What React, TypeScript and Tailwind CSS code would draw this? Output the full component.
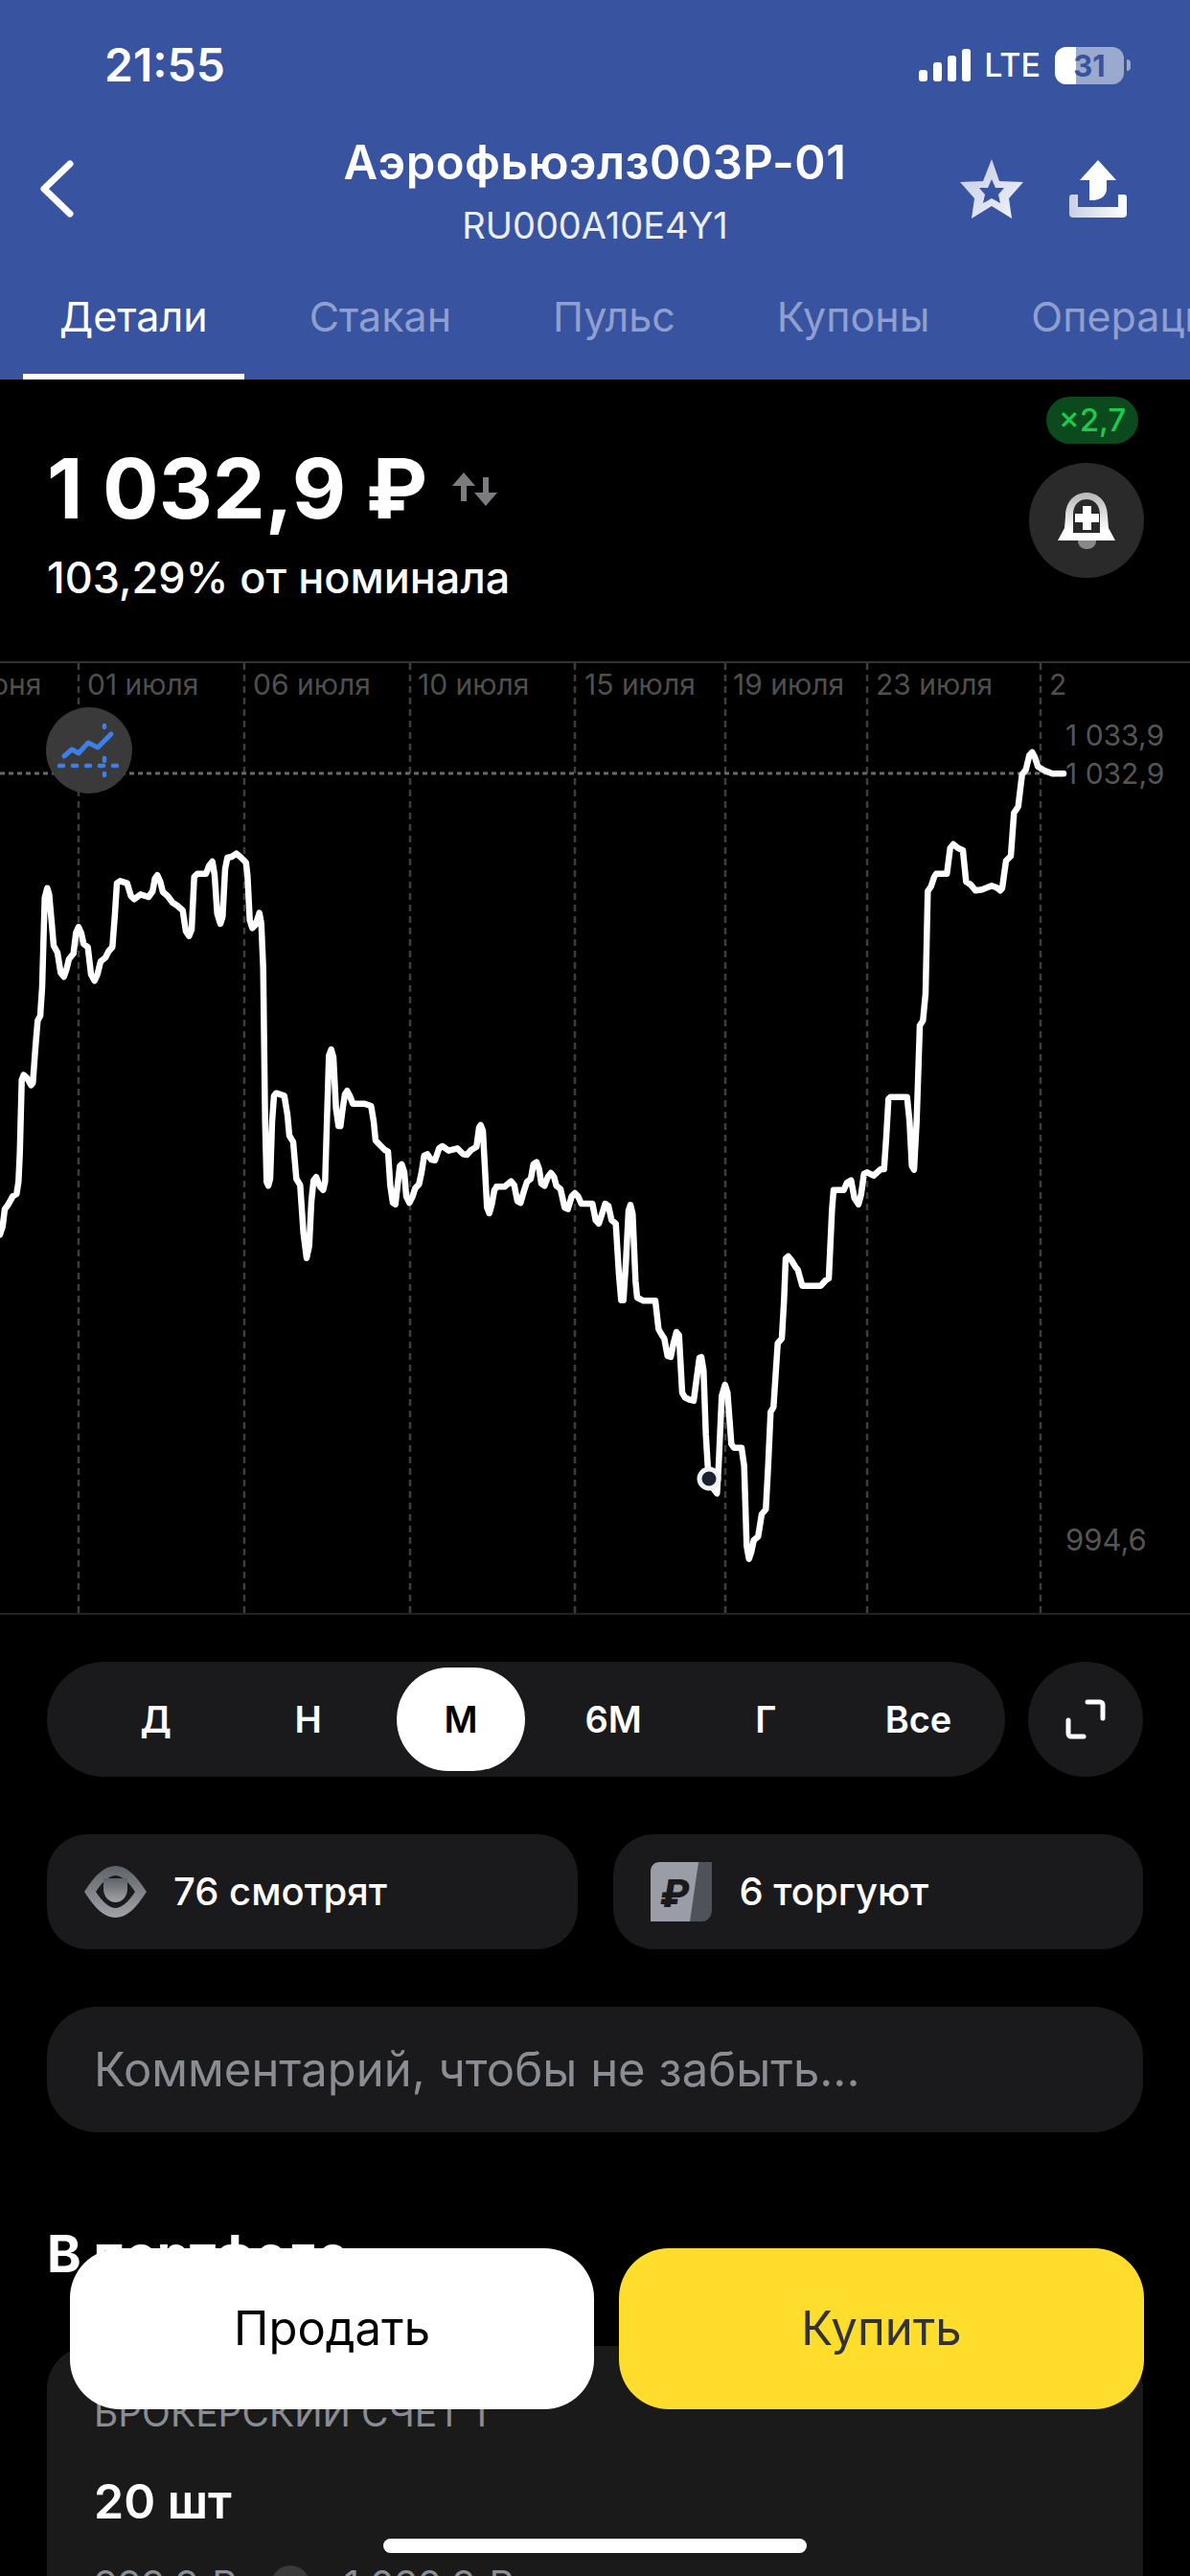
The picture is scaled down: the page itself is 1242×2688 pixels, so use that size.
import { ReactNode } from "react";

const TABS = ["Детали", "Стакан", "Пульс", "Купоны", "Операции"];
const PERIODS = ["Д", "Н", "М", "6М", "Г", "Все"];

const GRID_X = [82, 255, 428, 600, 757, 905, 1086];
const CHART_TOP = 692;

const DATES: [number, string][] = [
  [-34, "июня"],
  [91, "01 июля"],
  [264, "06 июля"],
  [436, "10 июля"],
  [610, "15 июля"],
  [765, "19 июля"],
  [914, "23 июля"],
  [1095, "2"],
];

// traced from the crops: [x, y] pairs at 3x, each run has its own origin
const RUN_A = [
  0,1255, 8,1230, 15,1175, 25,1162, 40,1135, 52,1128, 58,1090, 62,1000, 68,770, 74,755, 85,765, 97,787, 103,780,
  110,680, 118,585, 126,570, 132,480, 140,200, 148,170, 154,190, 162,280, 168,350, 180,372, 190,435, 200,448,
  208,425, 216,392, 230,375, 238,310, 246,292, 254,310, 262,345, 275,355, 285,440, 296,460, 305,440, 315,400,
  330,388, 340,368, 352,355, 360,250, 366,155, 376,148, 398,155, 410,195, 420,205, 440,190, 465,198, 478,180,
  485,140, 493,130, 502,150, 510,182, 525,195, 540,215, 555,225, 572,240, 582,305, 592,320, 600,300, 608,135,
  618,125, 645,125, 655,100, 665,87, 672,130, 680,250, 690,282, 697,260, 705,110, 712,75, 725,72, 740,62, 752,72,
  770,90, 775,130, 782,270, 790,295, 800,285, 812,248, 818,280, 824,420, 830,900, 835,1090, 840,1102, 846,1080,
  852,900, 858,820, 865,812, 890,820, 900,880, 906,945, 918,965, 928,1080, 940,1100, 950,1250, 960,1328, 968,1290,
  975,1150, 982,1085, 990,1075, 1002,1105, 1012,1115, 1018,1090, 1025,850, 1030,695, 1037,675, 1044,700, 1052,860,
  1060,915, 1066,915, 1073,860, 1080,815, 1087,805, 1095,820, 1105,845, 1140,845, 1162,852, 1170,900, 1176,960,
  1190,975, 1205,990, 1215,995, 1222,1100, 1230,1155, 1238,1160, 1245,1100, 1252,1040, 1258,1035, 1266,1060,
  1272,1135, 1282,1155, 1292,1135, 1300,1110, 1312,1097, 1320,1060, 1328,1008, 1338,1003, 1350,1020, 1362,1022,
  1375,985, 1385,978, 1405,992, 1432,985, 1450,1003, 1462,1005, 1475,990, 1492,980, 1500,920, 1505,912, 1512,930,
  1520,1080, 1525,1170, 1532,1188, 1540,1160, 1548,1115, 1556,1105,
];
const RUN_B = [
  355,325, 380,325, 400,308, 410,320, 420,370, 430,375, 440,340, 450,310, 462,300, 470,255, 480,248, 488,270,
  495,315, 505,322, 515,295, 525,282, 535,295, 542,322, 555,332, 568,390, 578,395, 590,355, 600,345, 610,355,
  620,378, 655,378, 665,430, 675,440, 685,410, 695,378, 705,385, 715,430, 728,440, 738,600, 745,680, 752,680,
  760,560, 768,400, 774,382, 781,410, 790,620, 795,672, 815,682, 852,682, 862,770, 870,785, 880,800, 890,855,
  900,858, 910,810, 918,780, 926,790, 936,970, 945,985, 960,992, 972,995, 982,920, 990,860, 996,858, 1003,900,
  1010,1100, 1016,1200, 1030,1265, 1045,1285, 1050,1200, 1060,980, 1070,945, 1078,970, 1090,1130, 1098,1142,
  1122,1142, 1130,1200, 1138,1450, 1145,1490, 1152,1470, 1160,1432, 1174,1420, 1185,1350, 1198,1335, 1205,1200,
  1213,1030, 1222,1015, 1235,815, 1248,800, 1255,680, 1260,550, 1268,543, 1278,555, 1290,575, 1298,585, 1312,635,
  1370,635, 1385,618, 1395,612, 1405,400, 1410,335, 1442,335, 1452,312, 1465,305, 1475,360, 1488,380, 1496,350,
  1505,285, 1515,280, 1535,290, 1558,270,
];
const RUN_C = [
  548,1350, 555,1250, 562,1130, 568,1124, 620,1124, 628,1200, 635,1340, 642,1352, 650,1200, 660,900, 670,885,
  678,800, 685,480, 695,465, 705,435, 712,425, 745,425, 755,345, 765,333, 780,345, 795,352, 805,450, 820,460,
  835,478, 855,475, 885,463, 900,468, 912,478, 918,470, 930,385, 945,370, 955,235, 968,215, 980,115, 992,100,
  1003,55, 1012,45, 1020,60, 1030,90, 1050,102, 1075,112, 1110,112,
];

function toPoints(run: number[], ox: number, oy: number) {
  const out: string[] = [];
  for (let i = 0; i < run.length; i += 2) {
    out.push(`${(ox + run[i] / 3).toFixed(1)},${(oy - CHART_TOP + run[i + 1] / 3).toFixed(1)}`);
  }
  return out;
}

const LINE = [...toPoints(RUN_A, 0, 870), ...toPoints(RUN_B, 400, 1130), ...toPoints(RUN_C, 740, 770)].join(" ");

export default function App() {
  return (
    <div className="relative h-[2688px] w-[1242px] overflow-hidden bg-black font-['Inter',sans-serif] text-white">
      {/* Header */}
      <div className="h-[396px] bg-[#38539f]">
        <StatusBar />
        <div className="grid h-[134px] grid-cols-[260px_1fr_260px] items-center">
          <div className="pb-[12px] pl-[41px]">
            <svg className="block" width="36" height="60" viewBox="0 0 36 60" fill="none">
              <path d="M32 4 L5 30 L32 56" stroke="white" strokeWidth="7" strokeLinecap="round" strokeLinejoin="round" />
            </svg>
          </div>
          <div className="pb-[9px] text-center whitespace-nowrap">
            <div className="text-[49px] leading-[60px] font-semibold tracking-[0.5px]">Аэрофьюэлз003Р-01</div>
            <div className="mt-[13px] text-[38px] leading-[44px] text-white/90">RU000A10E4Y1</div>
          </div>
          <div className="flex items-center justify-end gap-[48px] pr-[66px] pb-[12px]">
            <StarIcon />
            <ShareIcon />
          </div>
        </div>
        <div className="flex h-[126px] overflow-hidden pl-[24px] whitespace-nowrap">
          <div className="flex gap-[30px]">
            {TABS.map((t, i) => (
              <div
                key={t}
                className={`flex items-center border-b-[6px] px-[38px] text-[43px] ${
                  i === 0 ? "border-white text-white" : "border-transparent text-[#8fa0d0]"
                }`}
              >
                {t}
              </div>
            ))}
          </div>
        </div>
      </div>

      {/* Price */}
      <div className="flex h-[294px] justify-between pr-[48px] pl-[49px]">
        <div className="pt-[64px]">
          <div className="flex items-start">
            <span className="text-[87px] leading-[100px] font-bold">1 032,9 ₽</span>
            <svg className="mt-[33px] ml-[26px]" width="48" height="36" viewBox="0 0 48 36" fill="#7a7c80">
              <path d="M12 0 L24 14 H15 V30 H9 V14 H0 Z" />
              <path d="M35 35 L23 21 H32 V5 H38 V21 H47 Z" />
            </svg>
          </div>
          <div className="mt-[18px] text-[45px] leading-[50px] font-medium">103,29% от номинала</div>
        </div>
        <div className="flex w-[120px] flex-col items-end pt-[18px]">
          <div className="mr-[6px] flex h-[49px] w-[96px] items-center justify-center rounded-full bg-[#0b4a1d] text-[33px] font-medium text-[#1fc94f]">
            ×2,7
          </div>
          <div className="mt-[20px] flex h-[120px] w-[120px] items-center justify-center rounded-full bg-[#2a2a2a]">
            <BellIcon />
          </div>
        </div>
      </div>

      {/* Chart */}
      <Chart />

      {/* Controls */}
      <div className="mt-[49px] flex gap-[24px] px-[49px]">
        <div className="grid h-[120px] w-[1001px] grid-cols-6 items-center rounded-full bg-[#1a1a1c] pr-[11px] pl-[34px]">
          {PERIODS.map((p) => (
            <div key={p} className="flex justify-center">
              <div
                className={`flex h-[108px] w-[134px] items-center justify-center rounded-full text-[38px] font-semibold ${
                  p === "М" ? "bg-white text-black" : "text-white"
                }`}
              >
                {p}
              </div>
            </div>
          ))}
        </div>
        <div className="flex h-[120px] w-[120px] items-center justify-center rounded-full bg-[#1a1a1c]">
          <svg width="42" height="42" viewBox="0 0 42 42" fill="none" stroke="white" strokeWidth="5" strokeLinecap="round" strokeLinejoin="round">
            <path d="M23 3 H36 a3 3 0 0 1 3 3 V20" />
            <path d="M3 22 V36 a3 3 0 0 0 3 3 H19" />
          </svg>
        </div>
      </div>

      <div className="mt-[60px] grid grid-cols-2 gap-[37px] px-[49px]">
        <Stat icon={<EyeIcon />} label="76 смотрят" />
        <Stat icon={<RubleIcon />} label="6 торгуют" />
      </div>

      <div className="mx-[49px] mt-[60px] flex h-[131px] items-center rounded-[52px] bg-[#1a1a1c] pl-[49px] text-[49px] text-[#8a8d93]">
        Комментарий, чтобы не забыть...
      </div>

      <div className="mt-[97px] pl-[49px] text-[54px] leading-[60px] font-bold">В портфеле</div>

      <div className="mx-[49px] mt-[66px] h-[400px] rounded-[45px] bg-[#1a1a1a] px-[49px] pt-[50px]">
        <div className="text-[39px] leading-[40px] text-[#8a8d93]">БРОКЕРСКИЙ СЧЕТ 1</div>
        <div className="mt-[42px] text-[50px] leading-[60px] font-semibold">20 шт</div>
        <div className="mt-[32px] flex items-center gap-[36px] text-[40px] leading-[50px] text-[#8a8d93]">
          <span>999,9 ₽</span>
          <span className="h-[40px] w-[40px] rounded-full bg-[#3a3a3a]" />
          <span>1 032,9 ₽</span>
        </div>
      </div>

      {/* Sticky actions */}
      <div className="absolute top-[2346px] left-[73px] flex gap-[26px]">
        <div className="flex h-[168px] w-[547px] items-center justify-center rounded-[52px] bg-white text-[49px] text-black">
          Продать
        </div>
        <div className="flex h-[168px] w-[548px] items-center justify-center rounded-[52px] bg-[#ffdd2d] text-[49px] text-[#333333]">
          Купить
        </div>
      </div>

      <div className="absolute top-[2649px] left-[400px] h-[15px] w-[442px] rounded-full bg-white" />
    </div>
  );
}

function StatusBar() {
  return (
    <div className="flex h-[136px] items-center justify-between pr-[62px] pl-[109px]">
      <span className="text-[48px] font-semibold">21:55</span>
      <div className="flex items-center">
        <svg width="54" height="35" viewBox="0 0 54 35" fill="white">
          <rect x="0" y="22" width="9" height="12" rx="3" />
          <rect x="15" y="14" width="9" height="20" rx="3" />
          <rect x="30" y="7" width="9" height="27" rx="3" />
          <rect x="45" y="0" width="9" height="34" rx="3" />
        </svg>
        <span className="ml-[14px] text-[34px] leading-none font-medium">LTE</span>
        <div className="relative ml-[15px] flex h-[39px] w-[72px] items-center justify-center overflow-hidden rounded-[12px] bg-[#9ba9cf]">
          <div className="absolute inset-y-0 left-0 w-[22px] bg-white" />
          <span className="relative text-[31px] leading-none font-bold text-[#38539f]">31</span>
        </div>
        <div className="ml-[3px] h-[12px] w-[4px] rounded-r-full bg-[#9ba9cf]" />
      </div>
    </div>
  );
}

function Chart() {
  return (
    <div className="relative h-[995px] border-t-2 border-b-2 border-t-[#333333] border-b-[#222222]">
      <svg className="absolute top-0 left-0" width="1242" height="991" viewBox="0 0 1242 991" fill="none">
        {GRID_X.map((x) => (
          <line key={x} x1={x} y1="0" x2={x} y2="991" stroke="#3d3d3d" strokeWidth="2.5" strokeDasharray="7 5" />
        ))}
        <line x1="0" y1="115" x2="1105" y2="115" stroke="#6a6a6a" strokeWidth="3" strokeDasharray="5 4" />
        {DATES.map(([x, d]) => (
          <text key={d} x={x} y="33" fontSize="30" fill="#4f4f4f">
            {d}
          </text>
        ))}
        <text x="1112" y="86" fontSize="30" fill="#555555">1 033,9</text>
        <text x="1112" y="126" fontSize="30" fill="#555555">1 032,9</text>
        <text x="1112" y="926" fontSize="31" fill="#555555">994,6</text>
        <polyline points={LINE} stroke="white" strokeWidth="6.5" strokeLinejoin="round" strokeLinecap="round" />
        <circle cx="740" cy="851" r="10" fill="#1c2030" stroke="#f1f2f5" strokeWidth="5" />
      </svg>
      <div className="absolute top-[46px] left-[48px] flex h-[90px] w-[90px] items-center justify-center rounded-full bg-[#3a3a3a]">
        <svg width="90" height="90" viewBox="0 0 90 90" fill="none" stroke="#3f80e8" strokeLinecap="round" strokeLinejoin="round">
          <path d="M19 51 L27 44 L34 48 L44 37 L54 42 L68 28" strokeWidth="5" />
          <path d="M14 61 H18 M28 61 H32 M42 61 H46 M56 61 H60 M70 61 H74 M61 19 V21 M61 53 V56 M61 69 V71" strokeWidth="4.5" />
        </svg>
      </div>
    </div>
  );
}

function Stat({ icon, label }: { icon: ReactNode; label: string }) {
  return (
    <div className="flex h-[120px] items-center rounded-[42px] bg-[#1a1a1c] pl-[38px] text-[40px] font-medium">
      <div className="flex w-[66px] justify-center">{icon}</div>
      <span className="ml-[28px]">{label}</span>
    </div>
  );
}

function StarIcon() {
  return (
    <svg className="shrink-0" width="66" height="62" viewBox="0 0 66 62">
      <defs>
        <linearGradient id="star" x1="0" y1="0" x2="1" y2="1">
          <stop offset="0" stopColor="#c3cbe4" />
          <stop offset="1" stopColor="#f2f4fa" />
        </linearGradient>
      </defs>
      <path
        fill="url(#star)"
        fillRule="evenodd"
        d="M33 0 L41 23 L66 24 L51 41 L54 62 L33 49 L12 62 L15 41 L0 24 L24 23 Z M33 21 L29 30 L20 30 L26 37 L24 46 L33 41 L42 46 L40 37 L46 30 L37 30 Z"
      />
    </svg>
  );
}

function ShareIcon() {
  return (
    <svg className="shrink-0" width="60" height="60" viewBox="0 0 60 60">
      <defs>
        <linearGradient id="tray" x1="0" y1="0" x2="1" y2="0">
          <stop offset="0" stopColor="#c8d0e6" />
          <stop offset="1" stopColor="#ffffff" />
        </linearGradient>
      </defs>
      <path fill="white" d="M30 0 L49 21 H39 V30 C39 37 33 42 24 42 H21 V21 H11 Z" />
      <path
        fill="url(#tray)"
        d="M3 36 H9 V49 H51 V36 H57 a3 3 0 0 1 3 3 V56 a4 4 0 0 1 -4 4 H4 a4 4 0 0 1 -4 -4 V39 a3 3 0 0 1 3 -3 Z"
      />
    </svg>
  );
}

function BellIcon() {
  return (
    <svg width="60" height="60" viewBox="0 0 60 60">
      <defs>
        <linearGradient id="bell" x1="0" y1="0" x2="0" y2="1">
          <stop offset="0" stopColor="#b5b5b5" />
          <stop offset="0.8" stopColor="#ffffff" />
        </linearGradient>
      </defs>
      <path d="M21 51 H40 V52 A9.5 8 0 0 1 21 52 Z" fill="#888888" />
      <path
        fill="url(#bell)"
        fillRule="evenodd"
        d="M8 26 C8 10 18 1 30 1 C42 1 52 10 52 26 L53 38 L60 51 H0 L7 38 Z M16 43 H44 V24 C44 14 38 8 30 8 C22 8 16 14 16 24 Z"
      />
      <path fill="white" d="M26 15 H35 V23 H43 V32 H35 V40 H26 V32 H18 V23 H26 Z" />
    </svg>
  );
}

function EyeIcon() {
  return (
    <svg width="65" height="54" viewBox="0 0 65 54">
      <defs>
        <linearGradient id="eye" x1="0" y1="0" x2="0" y2="1">
          <stop offset="0" stopColor="#5f6268" />
          <stop offset="1" stopColor="#a0a3a8" />
        </linearGradient>
      </defs>
      <path
        fill="url(#eye)"
        fillRule="evenodd"
        d="M0 27 C12 8 22 0 32.5 0 C43 0 53 8 65 27 C53 46 43 54 32.5 54 C22 54 12 46 0 27 Z M12 27 C20 39 27 44 32.5 44 C38 44 45 39 53 27 C45 15 38 10 32.5 10 C27 10 20 15 12 27 Z"
      />
      <path fill="url(#eye)" d="M20 13 H45 V24 A12.5 14 0 0 1 20 24 Z" />
    </svg>
  );
}

function RubleIcon() {
  return (
    <svg width="64" height="62" viewBox="0 0 64 62">
      <path d="M10 0 H64 V50 C64 56 60 62 54 62 H0 V10 C0 4 4 0 10 0 Z" fill="#50525a" />
      <path d="M10 0 H50 L41 62 H0 V10 C0 4 4 0 10 0 Z" fill="#9a9da5" />
      <text x="25" y="47" fontSize="40" fontWeight="800" fontStyle="italic" textAnchor="middle" fill="#1a1a1c">
        ₽
      </text>
    </svg>
  );
}
